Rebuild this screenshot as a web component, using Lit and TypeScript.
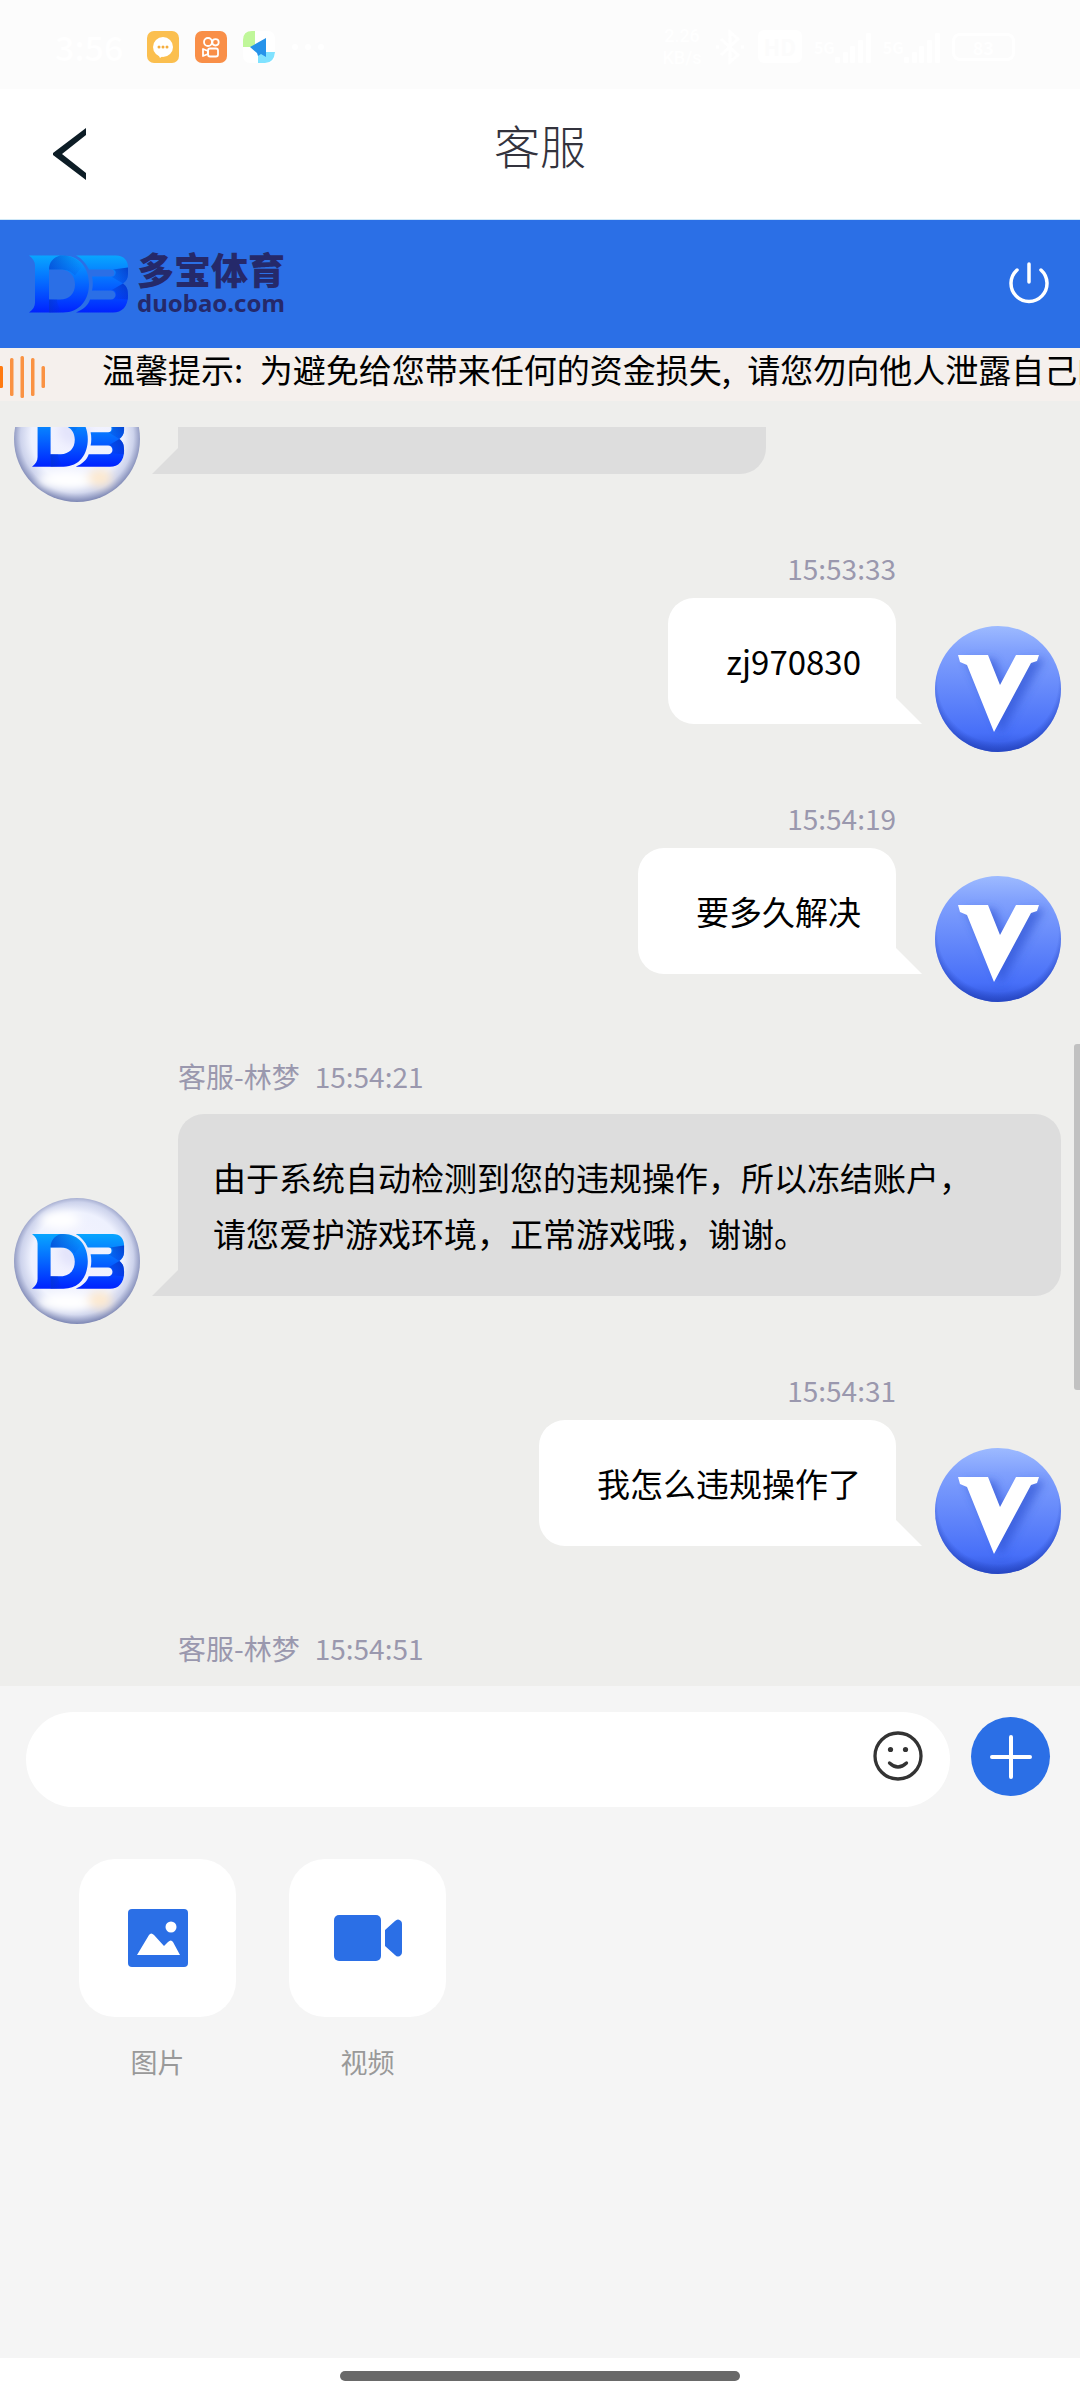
import { LitElement, html, css, svg, nothing } from "lit";
import { customElement, property } from "lit/decorators.js";

const brandMark = (id: string) => svg`
  <defs>
    <linearGradient id="${id}" x1="0" y1="0" x2="0" y2="1">
      <stop offset="0" stop-color="#08a6ff" />
      <stop offset="0.5" stop-color="#0566ff" />
      <stop offset="1" stop-color="#0022ff" />
    </linearGradient>
    <linearGradient id="${id}-fold" x1="0" y1="0" x2="1" y2="0">
      <stop offset="0" stop-color="#0434c8" stop-opacity="0.6" />
      <stop offset="1" stop-color="#0434c8" stop-opacity="0" />
    </linearGradient>
    <linearGradient id="${id}-edge" x1="1" y1="0" x2="0" y2="1">
      <stop offset="0" stop-color="#0428c0" stop-opacity="0.75" />
      <stop offset="1" stop-color="#0428c0" stop-opacity="0" />
    </linearGradient>
  </defs>
  <path fill="url(#${id})" fill-rule="evenodd"
    d="M0 0H34C51 0 60 13 60 28.500C60 44 51 57 34 57H0C4 54 6 51 6 47V10C6 6 4 3 0 0ZM20 14V44H31C40 44 46 38 46 29C46 20 40 14 31 14Z" />
  <path fill="url(#${id})"
    d="M47 0H87C95 0 99 5 99 12V19C99 23 97 26 94 28C98 31 99 34 99 40C99 51 93 57 84 57H47C54 54 59 50 61 44H82A4 4 0 0 0 82 35H63C64 31 64 25 63 21H82A3.500 3.500 0 0 0 82 14H60C57 8 53 3 47 0Z" />
  <path fill="url(#${id}-fold)" d="M20 14C20 7 24 2 31 0H36C44 1 50 5 54 10L46 20C42 16 38 14 31 14Z" />
  <path fill="url(#${id}-fold)" d="M20 44V57H34C30 53 28 48 28 44Z" />
  <path fill="url(#${id}-edge)" d="M99 12V19C99 23 97 26 94 28L82 21A3.500 3.500 0 0 0 84 14Z" />
  <path fill="url(#${id}-edge)" d="M94 28C98 31 99 34 99 40V44L84 43A4 4 0 0 0 82 35Z" />
`;

@customElement("chat-avatar")
export class ChatAvatar extends LitElement {
  @property() kind: "agent" | "member" = "agent";

  static styles = css`
    :host { display: block; flex: none; width: 126px; height: 126px; }
    .disc { display: block; width: 100%; height: 100%; }
  `;

  render() {
    if (this.kind === "agent") {
      return html`<svg class="disc" viewBox="0 0 126 126" role="img" aria-label="客服">
        <defs>
          <radialGradient id="pearl" cx="0.5" cy="0.48" r="0.52">
            <stop offset="0" stop-color="#f4f3ff" />
            <stop offset="0.7" stop-color="#eef1fe" />
            <stop offset="0.86" stop-color="#cdd3ec" />
            <stop offset="1" stop-color="#7d87b4" />
          </radialGradient>
          <filter id="soft" x="-50%" y="-50%" width="200%" height="200%"><feGaussianBlur stdDeviation="5" /></filter>
        </defs>
        <circle cx="63" cy="63" r="63" fill="url(#pearl)" />
        <g filter="url(#soft)">
          <ellipse cx="46" cy="22" rx="20" ry="9" fill="#fff" />
          <ellipse cx="52" cy="104" rx="28" ry="9" fill="#fff" />
          <ellipse cx="86" cy="102" rx="12" ry="9" fill="#fde9cf" />
          <ellipse cx="60" cy="55" rx="16" ry="14" fill="#e3e4fb" />
        </g>
        <g transform="translate(18 36) scale(.93 .96)">${brandMark("mark")}</g>
      </svg>`;
    }
    return html`<svg class="disc" viewBox="0 0 126 126" role="img" aria-label="V">
      <defs>
        <linearGradient id="face" x1="0" y1="0" x2="0" y2="1">
          <stop offset="0" stop-color="#9dbaff" />
          <stop offset="0.2" stop-color="#80a0fd" />
          <stop offset="0.85" stop-color="#476ff8" />
          <stop offset="1" stop-color="#3055dc" />
        </linearGradient>
        <radialGradient id="rim" cx="0.5" cy="0.44" r="0.57">
          <stop offset="0.84" stop-color="#2341b8" stop-opacity="0" />
          <stop offset="1" stop-color="#2341b8" stop-opacity="0.85" />
        </radialGradient>
        <filter id="cast" x="-30%" y="-30%" width="160%" height="160%"><feGaussianBlur stdDeviation="4" /></filter>
      </defs>
      <circle cx="63" cy="63" r="63" fill="url(#face)" />
      <circle cx="63" cy="63" r="63" fill="url(#rim)" />
      <path d="M30 33H60L70 60L86 33H110L104 42L66 108Z" fill="#2b50cf" opacity="0.6" filter="url(#cast)" />
      <path d="M23 29H53L65 59L81 29H104L102 35L96 37L59 106L32 39L25 36Z" fill="#fff" />
    </svg>`;
  }
}

@customElement("chat-message")
export class ChatMessage extends LitElement {
  @property({ type: Boolean, reflect: true }) own = false;
  @property() name = "";
  @property() time = "";
  @property({ attribute: false }) lines: string[] = [];

  static styles = css`
    :host { display: block; flex: none; }
    * { box-sizing: border-box; }
    .row { display: flex; align-items: flex-end; gap: 38px; padding: 0 19px 0 14px; }
    .own { flex-direction: row-reverse; gap: 39px; }
    .column { display: flex; flex-direction: column; flex: 1; min-width: 0; padding-bottom: 28px; }
    .own .column { align-items: flex-end; }
    .meta {
      display: flex; align-items: center; gap: 15px; height: 56px; margin-bottom: 8px; padding-bottom: 4px;
      font-size: 28px; line-height: 36px; color: #9a98ae;
    }
    .own .meta { height: 40px; }
    .bubble {
      position: relative; min-height: 126px; padding: 35px; border-radius: 26px 26px 26px 0; background: #dddddd;
      font-size: 33px; line-height: 56px; color: #000;
    }
    .own .bubble { padding-left: 58px; border-radius: 26px 26px 0 26px; background: #fff; }
    .bubble::after {
      content: ""; position: absolute; right: 100%; bottom: 0; width: 26px; height: 26px;
      background: inherit; clip-path: polygon(100% 0, 100% 100%, 0 100%);
    }
    .own .bubble::after { right: auto; left: 100%; clip-path: polygon(0 0, 100% 100%, 0 100%); }
    .line { display: block; }
  `;

  render() {
    return html`<div class="row ${this.own ? "own" : ""}">
      <chat-avatar kind=${this.own ? "member" : "agent"}></chat-avatar>
      <div class="column">
        <div class="meta">
          ${this.name ? html`<span>${this.name}</span>` : nothing}
          <time>${this.time}</time>
        </div>
        <div class="bubble">${this.lines.map((l) => html`<span class="line">${l}</span>`)}</div>
      </div>
    </div>`;
  }
}

@customElement("app-root")
export class AppRoot extends LitElement {
  static styles = css`
    :host {
      display: flex; flex-direction: column; height: 100vh; overflow: hidden; background: #fff;
      font-family: "Noto Sans CJK SC", "Noto Sans", sans-serif; color: #000;
    }
    *, *::before { box-sizing: border-box; }
    svg { display: block; flex: none; }
    button { display: flex; align-items: center; justify-content: center; margin: 0; padding: 0; border: 0; background: none; font: inherit; color: inherit; }

    .status { display: flex; align-items: center; flex: none; height: 89px; padding: 4px 65px 0 55px; background: #fcfcfc; color: #fff; }
    .clock { font-size: 34px; line-height: 40px; font-weight: 500; width: 92px; }
    .apps, .signals { display: flex; align-items: center; }
    .apps { gap: 16px; }
    .signals { margin-left: auto; gap: 12px; }
    .rate { display: flex; flex-direction: column; font-family: Roboto, sans-serif; font-size: 18px; line-height: 22px; font-weight: 500; text-align: center; }
    .hd { padding: 0 6px; border-radius: 6px; background: #fff; color: #fcfcfc; font-size: 22px; line-height: 33px; font-weight: 700; }
    .cell { display: flex; align-items: flex-end; font-size: 16px; line-height: 32px; font-weight: 700; }
    .battery { padding: 0 18px; border: 3px solid #fff; border-radius: 8px; font-size: 18px; line-height: 22px; font-weight: 700; }

    .header { display: grid; grid-template-columns: 1fr auto 1fr; align-items: center; flex: none; height: 131px; border-bottom: 1px solid #cfe8f7; }
    .back { justify-self: start; padding: 20px 53px; }
    .title { margin: 0; padding-bottom: 20px; font-size: 46px; line-height: 60px; font-weight: 300; color: #33333d; }

    .brandbar { display: flex; align-items: center; flex: none; height: 128px; padding: 0 31px 0 29px; background: #2b6fe6; }
    .brand { display: flex; align-items: center; gap: 9px; text-decoration: none; color: #25296a; }
    .words { display: flex; flex-direction: column; padding-bottom: 4px; }
    .cn { font-size: 37px; line-height: 42px; font-weight: 900; }
    .en { font-family: "Noto Sans", "Open Sans", sans-serif; font-size: 24px; line-height: 26px; font-weight: 700; }
    .power { margin-left: auto; }

    .notice { display: flex; align-items: flex-start; gap: 56px; flex: none; height: 53px; overflow: hidden; background: #f5f0ed; }
    .wave { margin-top: 8px; }
    .marquee { margin: 0; font-size: 33px; line-height: 42px; white-space: nowrap; }

    .chat { position: relative; display: flex; flex-direction: column; flex: 1; min-height: 0; padding-top: 26px; background: #eeeeec; }
    .scroller { display: flex; flex-direction: column; gap: 48px; flex: 1; min-height: 0; overflow: hidden; }
    .earlier { display: flex; align-items: flex-end; gap: 38px; flex: none; height: 75px; padding: 0 14px; overflow: hidden; }
    .stub { position: relative; width: 588px; height: 126px; margin-bottom: 28px; border-radius: 26px 26px 26px 0; background: #dddddd; }
    .stub::before {
      content: ""; position: absolute; right: 100%; bottom: 0; width: 26px; height: 26px;
      background: inherit; clip-path: polygon(100% 0, 100% 100%, 0 100%);
    }
    .thumb { position: absolute; right: 0; top: 50%; width: 6px; height: 27%; border-radius: 3px 0 0 3px; background: #c1c1c1; }

    .panel { flex: none; height: 672px; padding: 26px 30px 0 26px; background: #f5f5f5; }
    .compose { display: flex; align-items: flex-start; gap: 21px; }
    .field { display: flex; align-items: flex-start; flex: 1; min-width: 0; height: 95px; padding: 0 27px 0 40px; border-radius: 48px; background: #fff; }
    .input { flex: 1; min-width: 0; height: 95px; padding: 0; border: 0; outline: 0; background: none; font: inherit; font-size: 33px; }
    .emoji { height: 88px; }
    .more { flex: none; width: 79px; height: 79px; margin-top: 5px; border-radius: 50%; background: #2b6fe6; }
    .tools { display: flex; gap: 53px; padding: 52px 53px 0; }
    .tool { flex-direction: column; gap: 25px; font-size: 27px; line-height: 40px; color: #999; }
    .tile { display: flex; align-items: center; justify-content: center; width: 157px; height: 158px; border-radius: 36px; background: #fff; }

    .home { display: flex; justify-content: center; flex: none; height: 42px; padding-top: 13px; background: #fff; }
    .pill { width: 37%; height: 10px; border-radius: 5px; background: #696969; }
  `;

  private signal() {
    return html`<span class="cell">5G<svg width="36" height="30" viewBox="0 0 36 30" fill="#fff" aria-hidden="true">
      <rect x="0" y="24" width="5" height="6" rx="1" /><rect x="8" y="19" width="5" height="11" rx="1" />
      <rect x="15" y="13" width="5" height="17" rx="1" /><rect x="23" y="7" width="5" height="23" rx="1" />
      <rect x="31" y="0" width="5" height="30" rx="1" /></svg></span>`;
  }

  render() {
    return html`
      <div class="status">
        <span class="clock">3:56</span>
        <div class="apps">
          <svg width="32" height="32" viewBox="0 0 32 32" aria-hidden="true">
            <rect width="32" height="32" rx="7" fill="#fbbf4f" />
            <circle cx="16" cy="16" r="10" fill="#fff" /><path d="M11 23L13 27L17 24Z" fill="#fff" />
            <g fill="#f5ad3d"><circle cx="12" cy="16" r="1.500" /><circle cx="16" cy="16" r="1.500" /><circle cx="20" cy="16" r="1.500" /></g>
          </svg>
          <svg width="32" height="32" viewBox="0 0 32 32" aria-hidden="true">
            <rect width="32" height="32" rx="7" fill="#f98f48" />
            <g fill="none" stroke="#fff" stroke-width="1.800">
              <circle cx="13" cy="11" r="4" /><circle cx="20.500" cy="11.300" r="3.200" />
              <rect x="13" y="17.500" width="10" height="8" rx="2" /><path d="M13 20L8 18V25L13 23Z" stroke-linejoin="round" />
            </g>
          </svg>
          <svg width="32" height="32" viewBox="0 0 32 32" aria-hidden="true">
            <rect width="32" height="32" rx="7" fill="#fff" />
            <path d="M12 0V16H0V9Q0 0 9 0Z" fill="#c0f79a" /><path d="M15 32V21H32Q31 32 22 32Z" fill="#80e2ff" />
            <path d="M7 16L23 7V26L18 23L15 25L14 22Z" fill="#2693ea" />
          </svg>
          <svg width="34" height="8" viewBox="0 0 34 8" fill="#fff" aria-hidden="true"><circle cx="4" cy="4" r="3" /><circle cx="17" cy="4" r="3" /><circle cx="30" cy="4" r="3" /></svg>
        </div>
        <div class="signals">
          <span class="rate"><span>2.26</span><span>KB/s</span></span>
          <svg width="32" height="36" viewBox="0 0 32 36" fill="none" stroke="#fff" stroke-width="3" aria-hidden="true"><path d="M7 10L24 26L16 33V3L24 10L7 26M2 18H5M27 18H30" /></svg>
          <span class="hd">HD</span>
          ${this.signal()}${this.signal()}
          <span class="battery">83</span>
        </div>
      </div>

      <header class="header">
        <button class="back" type="button" aria-label="返回">
          <svg width="33" height="52" viewBox="0 0 33 52"><path d="M33 0V7L9 26L33 45V52L0 27V25Z" fill="#0d1d26" /></svg>
        </button>
        <h1 class="title">客服</h1>
      </header>

      <div class="brandbar">
        <a class="brand" href="#" aria-label="多宝体育 duobao.com">
          <svg width="99" height="58" viewBox="0 0 99 57" aria-hidden="true">${brandMark("logo")}</svg>
          <span class="words"><span class="cn">多宝体育</span><span class="en">duobao.com</span></span>
        </a>
        <button class="power" type="button" aria-label="退出">
          <svg width="40" height="44" viewBox="0 2 40 44" fill="none" stroke="#fff" stroke-width="3.500" stroke-linecap="round">
            <path d="M20 4V22M8 10A18 18 0 1 0 32 10" />
          </svg>
        </button>
      </div>

      <div class="notice">
        <svg class="wave" width="46" height="42" viewBox="0 0 46 42" fill="#fa9243" aria-hidden="true">
          <rect x="-2" y="10" width="5" height="22" rx="1.500" fill="#ff7a10" /><rect x="10" y="2" width="3.500" height="38" rx="1.500" />
          <rect x="20.500" y="0" width="3.500" height="42" rx="1.500" /><rect x="31" y="2" width="3.500" height="38" rx="1.500" />
          <rect x="41.500" y="10" width="3.500" height="22" rx="1.500" />
        </svg>
        <p class="marquee">温馨提示:\u2002为避免给您带来任何的资金损失,\u2002请您勿向他人泄露自己的</p>
      </div>

      <main class="chat">
        <div class="scroller">
          <div class="earlier"><chat-avatar kind="agent"></chat-avatar><div class="stub"></div></div>
          <chat-message own time="15:53:33" .lines=${["zj970830"]}></chat-message>
          <chat-message own time="15:54:19" .lines=${["要多久解决"]}></chat-message>
          <chat-message name="客服-林梦" time="15:54:21"
            .lines=${["由于系统自动检测到您的违规操作，所以冻结账户，", "请您爱护游戏环境，正常游戏哦，谢谢。"]}></chat-message>
          <chat-message own time="15:54:31" .lines=${["我怎么违规操作了"]}></chat-message>
          <chat-message name="客服-林梦" time="15:54:51"></chat-message>
        </div>
        <div class="thumb"></div>
      </main>

      <section class="panel">
        <form class="compose" @submit=${(e: Event) => e.preventDefault()}>
          <div class="field">
            <input class="input" type="text" aria-label="消息" />
            <button class="emoji" type="button" aria-label="表情">
              <svg width="50" height="50" viewBox="0 0 50 50" fill="none" stroke="#333" stroke-width="3.300" stroke-linecap="round">
                <circle cx="25" cy="25" r="23" /><path d="M16.500 32Q25 40 33.500 32" />
                <circle cx="17.500" cy="18.500" r="2.600" fill="#333" stroke="none" /><circle cx="32.500" cy="18.500" r="2.600" fill="#333" stroke="none" />
              </svg>
            </button>
          </div>
          <button class="more" type="button" aria-label="更多">
            <svg width="44" height="44" viewBox="0 0 44 44" stroke="#fff" stroke-width="4" stroke-linecap="round"><path d="M22 2V42M3 22H41" /></svg>
          </button>
        </form>
        <div class="tools">
          <button class="tool" type="button">
            <span class="tile"><svg width="60" height="58" viewBox="0 0 60 58" aria-hidden="true">
              <rect width="60" height="58" rx="4" fill="#2b6fe6" /><circle cx="43" cy="18" r="5.500" fill="#fff" />
              <path d="M9 46L21 26Q23 23 26 26L36 37L40 33Q43 30 45 33L52 46Z" fill="#fff" />
            </svg></span>
            <span>图片</span>
          </button>
          <button class="tool" type="button">
            <span class="tile"><svg width="68" height="46" viewBox="0 0 68 46" fill="#2b6fe6" aria-hidden="true">
              <rect width="47" height="46" rx="5" /><path d="M51 15L61 6Q64 3 67 6Q68 7 68 9V37Q68 39 67 40Q64 43 61 40L51 31Z" />
            </svg></span>
            <span>视频</span>
          </button>
        </div>
      </section>

      <div class="home"><div class="pill"></div></div>
    `;
  }
}
